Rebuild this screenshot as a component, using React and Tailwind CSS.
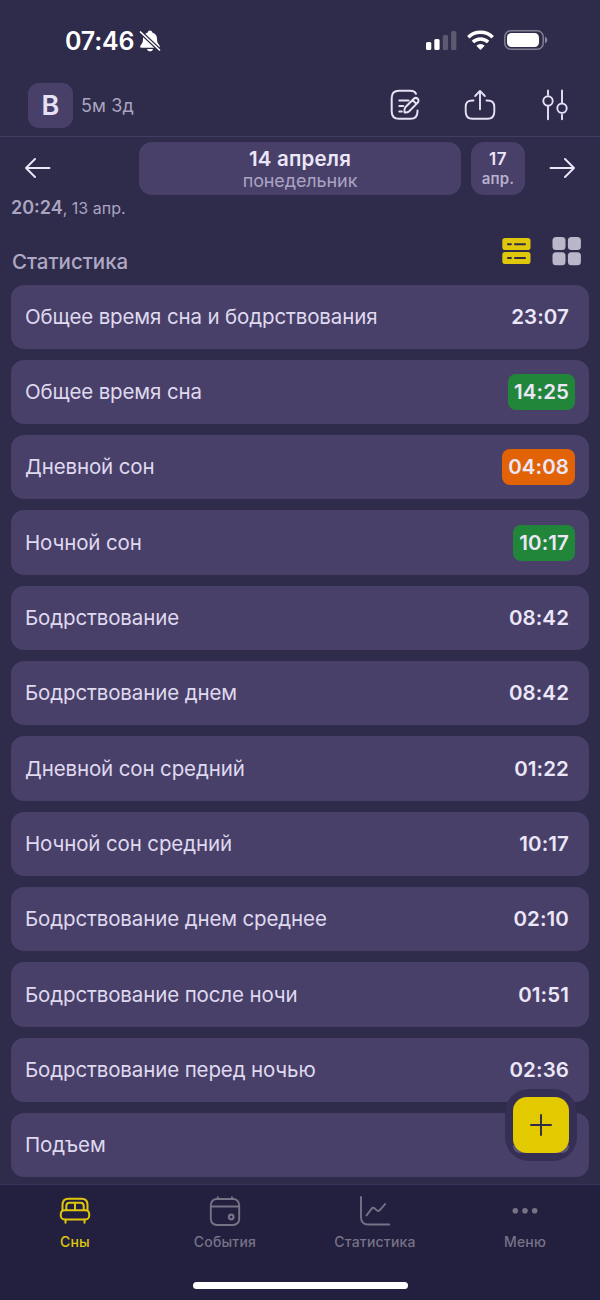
import { useState } from "react";
import clsx from "clsx";

const STATS = [
  { label: "Общее время сна и бодрствования", value: "23:07" },
  { label: "Общее время сна", value: "14:25", status: "good" },
  { label: "Дневной сон", value: "04:08", status: "warn" },
  { label: "Ночной сон", value: "10:17", status: "good" },
  { label: "Бодрствование", value: "08:42" },
  { label: "Бодрствование днем", value: "08:42" },
  { label: "Дневной сон средний", value: "01:22" },
  { label: "Ночной сон средний", value: "10:17" },
  { label: "Бодрствование днем среднее", value: "02:10" },
  { label: "Бодрствование после ночи", value: "01:51" },
  { label: "Бодрствование перед ночью", value: "02:36" },
  { label: "Подъем", value: "" },
];

const TABS = [
  { id: "sleep", label: "Сны", Icon: BedIcon },
  { id: "events", label: "События", Icon: CalendarIcon },
  { id: "stats", label: "Статистика", Icon: ChartIcon },
  { id: "menu", label: "Меню", Icon: DotsIcon },
];

const stroke = {
  fill: "none",
  stroke: "currentColor",
  strokeLinecap: "round",
  strokeLinejoin: "round",
};

function BellOffIcon() {
  return (
    <svg width="22" height="24" viewBox="0 0 22 24" fill="currentColor">
      <path d="M11 1.500c-1.300 0-2.100.8-2.300 1.900C5.800 4.400 4 6.500 4 9.500c0 3.300-.5 4.700-2 6.300-.6.700-.8 1.200-.8 1.700 0 .8.600 1.200 1.500 1.200h16.600c.9 0 1.500-.4 1.500-1.200 0-.5-.2-1-.8-1.700-1.500-1.600-2-3-2-6.300 0-3-1.800-5.100-4.700-6.100C13.100 2.300 12.300 1.500 11 1.500Z" />
      <path d="M8 19.900h6c-.3 1.400-1.500 2.300-3 2.300s-2.700-.9-3-2.300Z" />
      <path d="M1 2.500 21 21.500" stroke="#2f2b4a" strokeWidth="4" />
      <path d="M1.500 3 20.500 21" stroke="currentColor" strokeWidth="1.700" strokeLinecap="round" />
    </svg>
  );
}

function SignalIcon() {
  return (
    <svg width="31" height="20" viewBox="0 0 31 20" fill="currentColor">
      <rect x="0" y="12" width="5.300" height="7.900" rx="1.500" />
      <rect x="8.300" y="9" width="5.300" height="10.900" rx="1.500" />
      <rect x="16.800" y="5" width="5.300" height="14.900" rx="1.500" opacity="0.22" />
      <rect x="25.100" y="0.900" width="5.300" height="19" rx="1.500" opacity="0.22" />
    </svg>
  );
}

function WifiIcon() {
  return (
    <svg width="27" height="20" viewBox="0 0 27 20" fill="none" stroke="currentColor" strokeWidth="3.500">
      <path d="M1.300 7.200a17.500 17.500 0 0 1 24.400 0" />
      <path d="M5.900 12.100a11 11 0 0 1 15.200 0" />
      <path d="M13.500 20 9.300 15.800a6 6 0 0 1 8.400 0Z" fill="currentColor" stroke="none" />
    </svg>
  );
}

function BatteryIcon() {
  return (
    <svg width="44" height="20" viewBox="0 0 44 20">
      <rect x="0.800" y="0.800" width="38.400" height="18.400" rx="6" fill="none" stroke="white" strokeOpacity="0.4" strokeWidth="1.500" />
      <rect x="3" y="3" width="32" height="14" rx="4.500" fill="white" />
      <path d="M41 6.700c1.400.5 2.200 1.800 2.200 3.300s-.8 2.800-2.200 3.300Z" fill="white" fillOpacity="0.45" />
    </svg>
  );
}

function NoteIcon() {
  return (
    <svg width="30" height="32" viewBox="0 0 30 32" {...stroke} strokeWidth="2">
      <path d="M26 4.800C25 2.400 23 1.700 20.500 1.700H9C4 1.700 1.700 4 1.700 9v13.500c0 5 2.300 7.300 7.300 7.300h11.500c5 0 7-2.300 7-7.300V21.500" />
      <path d="M9.300 11.600h9.200M9.300 17.100h3.900M9.300 22.600h2.500" />
      <path d="m15.300 18.300 8.300-8.300c1.100-1.100 2.900-1.400 4.100-.2s.9 3-.2 4.100l-8.300 8.300c-1.100 1-3 1.500-4.700 1.300-.2-1.700-.2-4.100.8-5.200ZM22.700 11.200l3.700 3.700" />
    </svg>
  );
}

function ShareIcon() {
  return (
    <svg width="32" height="32" viewBox="0 0 32 32" {...stroke} strokeWidth="1.900">
      <path d="M9.500 11.500h-1c-4.500 0-6.800 1.600-6.800 6.300v5c0 4.700 2.100 7 6.800 7h15c4.700 0 6.800-2.300 6.800-7v-5c0-4.700-2.300-6.300-6.800-6.300h-1" />
      <path d="M16 20.300V2M11.200 7 16 1.900 20.800 7" />
    </svg>
  );
}

function SlidersIcon() {
  return (
    <svg width="26" height="32" viewBox="0 0 26 32" {...stroke} strokeWidth="1.900">
      <path d="M6 1.500v4.300M6 17.300v13M20 1.500v12.300M20 25.600v4.700" />
      <circle cx="6" cy="12" r="4.700" />
      <circle cx="20" cy="19.200" r="4.700" />
    </svg>
  );
}

function ArrowIcon({ className }) {
  return (
    <svg width="26" height="20" viewBox="0 0 26 20" className={className} {...stroke} strokeWidth="1.900">
      <path d="M24.500 10H1.300M10 1 1 10l9 9" />
    </svg>
  );
}

function ListViewIcon() {
  return (
    <svg width="29" height="28" viewBox="0 0 29 28" fill="currentColor">
      <rect x="0.300" y="1" width="28.200" height="12" rx="2.800" />
      <rect x="0.300" y="15" width="28.200" height="12" rx="2.800" />
      <path d="M6 7.200h2.900M13 7.200h10M6 21h2.900M13 21h10" stroke="#2f2b4a" strokeWidth="2.100" strokeLinecap="round" />
    </svg>
  );
}

function GridViewIcon() {
  return (
    <svg width="30" height="29" viewBox="0 0 30 29" fill="currentColor">
      <rect x="0.500" y="0" width="13" height="13" rx="3.500" />
      <rect x="15.900" y="0" width="13" height="13" rx="3.500" />
      <rect x="0.500" y="15.200" width="13" height="13" rx="3.500" />
      <rect x="15.900" y="15.200" width="13" height="13" rx="3.500" />
    </svg>
  );
}

function BedIcon() {
  return (
    <svg width="32" height="32" viewBox="0 0 32 32" {...stroke} strokeWidth="2">
      <path d="M3.500 14V9c0-4.300 1.700-6.200 6-6.200h13c4.300 0 6 1.900 6 6.200v5" />
      <path d="M7.300 14v-3.800c0-2.300 1-3.400 3.300-3.400h10.800c2.300 0 3.300 1.100 3.300 3.400V14M16 7v7" />
      <rect x="1.800" y="14.200" width="28.400" height="9.300" rx="3.700" />
      <path d="M6.500 23.700v3M25.500 23.700v3" />
    </svg>
  );
}

function CalendarIcon() {
  return (
    <svg width="32" height="32" viewBox="0 0 32 32" {...stroke} strokeWidth="1.900">
      <rect x="1.800" y="3" width="28.400" height="26" rx="6" />
      <path d="M2 10.500h28M8.800 1.300V3M23 1.300V3" />
      <circle cx="22.200" cy="21" r="2.300" strokeWidth="2.200" />
    </svg>
  );
}

function ChartIcon() {
  return (
    <svg width="32" height="32" viewBox="0 0 32 32" {...stroke} strokeWidth="1.900">
      <path d="M2 1v20c0 5 2.300 7.500 7.300 7.500h21" />
      <path d="m7.500 19.500 5.200-6.800c.9-1.100 1.900-1.200 2.900-.3l2.300 2c1 .9 2 .8 2.900-.2l5.400-6.200" />
    </svg>
  );
}

function DotsIcon() {
  return (
    <svg width="32" height="32" viewBox="0 0 32 32" fill="currentColor">
      <circle cx="6.300" cy="14.800" r="2.800" />
      <circle cx="16" cy="14.800" r="2.800" />
      <circle cx="25.700" cy="14.800" r="2.800" />
    </svg>
  );
}

function StatusBar() {
  return (
    <div className="flex h-[74px] shrink-0 items-start justify-between pl-[65px] pr-[52px] text-white">
      <div className="flex items-center gap-[5px] pt-[26px]">
        <span className="text-[25px] leading-[30px] font-semibold tracking-[-0.2px]">07:46</span>
        <BellOffIcon />
      </div>
      <div className="flex items-center gap-[10px] pt-[30px]">
        <SignalIcon />
        <WifiIcon />
        <BatteryIcon />
      </div>
    </div>
  );
}

function Header() {
  return (
    <header className="flex h-[63px] shrink-0 items-center justify-between border-b border-[#423d63] pl-7 pr-8 text-[#e6e1f5]">
      <div className="flex items-center gap-2">
        <div className="flex size-[45px] items-center justify-center rounded-[11px] bg-[#494069] pt-[2px] text-[27px] font-semibold">
          B
        </div>
        <span className="pt-px text-[18px] tracking-[0.1px] text-[#aaa4c0]">5м 3д</span>
      </div>
      <div className="flex items-center">
        <button><NoteIcon /></button>
        <button className="ml-[44px]"><ShareIcon /></button>
        <button className="ml-[46px]"><SlidersIcon /></button>
      </div>
    </header>
  );
}

function DateNav() {
  return (
    <div className="flex h-[58px] shrink-0 items-end pl-[25px] pr-[25px] text-[#ebe6f8]">
      <button className="flex h-[53px] w-[114px] items-center pb-px">
        <ArrowIcon />
      </button>
      <div className="flex h-[53px] w-[322px] flex-col items-center justify-center rounded-[13px] bg-[#494069] pt-[2px]">
        <span className="text-[20.500px] leading-[23px] font-semibold tracking-[0.2px]">14 апреля</span>
        <span className="text-[18px] leading-[22px] tracking-[-0.1px] text-[#aaa4c4]">понедельник</span>
      </div>
      <div className="ml-[10px] flex h-[53px] w-[54px] flex-col items-center justify-center rounded-[13px] bg-[#494069] font-semibold">
        <span className="text-[17px] leading-[19px] tracking-[0.5px]">17</span>
        <span className="text-[15px] leading-[19px] tracking-[0.2px] text-[#b7b0ce]">апр.</span>
      </div>
      <button className="ml-auto flex h-[53px] items-center pb-px">
        <ArrowIcon className="rotate-180" />
      </button>
    </div>
  );
}

function StatRow({ label, value, status }) {
  return (
    <li className="flex h-[64.330px] shrink-0 items-center justify-between rounded-[13px] bg-[#494069] px-[14px]">
      <span className="pt-px text-[20.500px] tracking-[-0.130px] text-[#dfd9ef]">{label}</span>
      <span
        className={clsx(
          "flex h-9 items-center rounded-[8px] px-[6px] pt-px text-[20.500px] font-semibold tracking-[0.1px] text-[#ebe6f8]",
          status === "good" && "bg-[#22863a]",
          status === "warn" && "bg-[#e26306]"
        )}
      >
        {value}
      </span>
    </li>
  );
}

export default function App() {
  const [tab, setTab] = useState("sleep");

  return (
    <div className="relative flex h-[1300px] w-[600px] flex-col overflow-hidden bg-[#2f2b4a] font-['Inter',sans-serif]">
      <StatusBar />
      <Header />
      <DateNav />

      <main className="flex min-h-0 flex-1 flex-col px-[11px]">
        <p className="h-[42px] pt-[2px] text-[16px] leading-[22px] text-[#aaa4c0]">
          <span className="text-[18px] font-semibold">20:24</span>, 13 апр.
        </p>
        <div className="flex h-[47.500px] shrink-0 items-start justify-between pr-[7px]">
          <h2 className="pt-[12px] pl-px text-[20.500px] leading-[26px] font-medium text-[#aea8c4]">Статистика</h2>
          <div className="flex items-start gap-[21px]">
            <button className="text-[#dfc70c]"><ListViewIcon /></button>
            <button className="text-[#bbb7cb]"><GridViewIcon /></button>
          </div>
        </div>
        <ul className="flex flex-col gap-[11px]">
          {STATS.map((item) => (
            <StatRow key={item.label} {...item} />
          ))}
        </ul>
      </main>

      <nav className="flex h-[116px] shrink-0 flex-col items-center border-t border-[#38335a] bg-[#231f3e]">
        <div className="grid w-full grid-cols-4 pt-[11px]">
          {TABS.map(({ id, label, Icon }) => (
            <button
              key={id}
              onClick={() => setTab(id)}
              className={clsx(
                "flex flex-col items-center gap-1",
                tab === id ? "text-[#dfc70c]" : "text-[#777386]"
              )}
            >
              <Icon />
              <span className="text-[14px] leading-[20px] font-medium tracking-[0.200px]">{label}</span>
            </button>
          ))}
        </div>
        <div className="mt-[30px] h-[7px] w-[215px] rounded-full bg-white" />
      </nav>

      {/* floating add button over the list */}
      <button className="absolute top-[1089px] left-[505px] flex size-[72px] items-center justify-center rounded-[24px] bg-[#362f55]">
        <span className="flex size-14 items-center justify-center rounded-b-[7px] bg-linear-to-b from-transparent from-85% to-[#5d5574] to-85%">
          <span className="flex size-14 items-center justify-center rounded-[14px] bg-[#e2c900] text-[#2f2b4a]">
            <svg width="22" height="22" viewBox="0 0 22 22" {...stroke} strokeWidth="1.900">
              <path d="M11 1v20M1 11h20" />
            </svg>
          </span>
        </span>
      </button>
    </div>
  );
}
